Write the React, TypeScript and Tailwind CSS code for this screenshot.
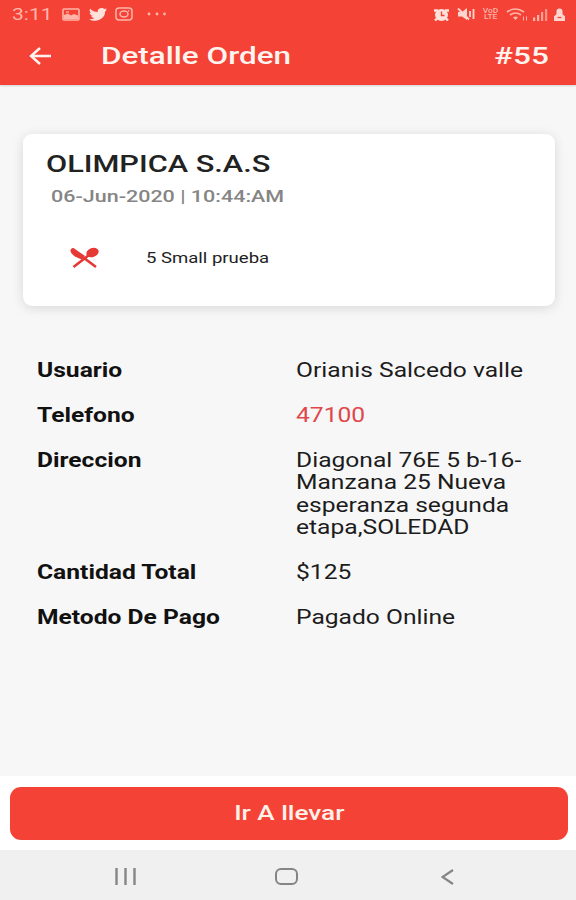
import { ReactNode } from "react";

type Row = {
  label: string;
  value: ReactNode;
  valueClass?: string;
};

const rows: Row[] = [
  { label: "Usuario", value: "Orianis Salcedo valle" },
  { label: "Telefono", value: "47100", valueClass: "text-[#e0474a]" },
  {
    label: "Direccion",
    value: (
      <>
        Diagonal 76E 5 b-16-
        <br />
        Manzana 25 Nueva
        <br />
        esperanza segunda
        <br />
        etapa,SOLEDAD
      </>
    ),
  },
  { label: "Cantidad Total", value: "$125" },
  { label: "Metodo De Pago", value: "Pagado Online" },
];

function StatusBar() {
  return (
    <div className="flex h-7 items-center justify-between pl-3 pr-[10px] text-[#ffb5aa]">
      <div className="flex items-center">
        <span className="w-[50px] origin-left scale-x-[1.24] text-[17px] leading-none">3:11</span>
        <svg className="h-[13px] w-[18px]" viewBox="0 0 18 13" fill="none" stroke="currentColor" strokeWidth="1.6">
          <rect x="1" y="1" width="16" height="11" rx="1" />
          <path d="M2 11V7l4-1.500 3 2 3-1.500 4 1.500V11z" fill="currentColor" stroke="none" />
          <path d="M4 4h3" strokeWidth="1.2" />
        </svg>
        <svg className="ml-[9px] h-[13px] w-[18px]" viewBox="0 0 24 20" preserveAspectRatio="none" fill="#ffe1dc">
          <path d="M24 2.4a10 10 0 0 1-2.8.8A5 5 0 0 0 23.3.5a10 10 0 0 1-3.1 1.2 4.9 4.9 0 0 0-8.4 4.5A14 14 0 0 1 1.7 1a4.9 4.9 0 0 0 1.5 6.600A5 5 0 0 1 1 7v.1a4.9 4.9 0 0 0 4 4.8 5 5 0 0 1-2.3.1 4.9 4.9 0 0 0 4.6 3.4A10 10 0 0 1 0 17.4 14 14 0 0 0 21.5 5a10 10 0 0 0 2.5-2.6z" />
        </svg>
        <svg className="ml-[8px] h-[14px] w-[18px]" viewBox="0 0 18 14" fill="none" stroke="currentColor" strokeWidth="1.5">
          <rect x="1" y="1" width="16" height="12" rx="3" />
          <ellipse cx="9" cy="7" rx="4" ry="3" />
          <path d="M13 3.8h1.2" />
        </svg>
        <svg className="ml-[14px] h-1 w-5" viewBox="0 0 20 4" fill="currentColor">
          <circle cx="2" cy="2" r="1.4" />
          <circle cx="10" cy="2" r="1.4" />
          <circle cx="17.500" cy="2" r="1.4" />
        </svg>
      </div>
      <div className="flex items-center">
        {/* alarm */}
        <svg className="-ml-[3px] mr-[2px] h-[13px] w-[17px]" viewBox="0 0 16 13">
          <ellipse cx="8" cy="7" rx="6.500" ry="6" fill="#ffe1dc" />
          <path d="M.500 2.500H4.500M15.500 2.500H11.500M3.500 10.500L1.500 12.500M12.500 10.500L14.500 12.500" stroke="#ffe1dc" strokeWidth="2.4" />
          <path d="M8 3.500V7.500H11" fill="none" stroke="#f44336" strokeWidth="1.4" />
        </svg>
        {/* muted */}
        <svg className="ml-[5px] h-[14px] w-[18px]" viewBox="0 0 18 14" fill="none" stroke="#ffd6cf" strokeWidth="1.8">
          <path d="M1 5h4l5-4v12L5 9.500H1z" fill="#ffd6cf" stroke="none" />
          <path d="M1 1.500L12 12.500M13 4v6M16.500 2v10" />
        </svg>
        <div className="ml-[7px] flex w-[17px] flex-col items-center text-[7px] font-medium leading-[6.5px]">
          <span className="scale-x-[1.2]">VoD</span>
          <span className="scale-x-[1.2]">LTE</span>
        </div>
        <svg className="ml-[7px] h-[13px] w-[23px]" viewBox="0 0 23 13" fill="none" stroke="currentColor" strokeWidth="1.6">
          <path d="M1 4Q9.500-2 18 4M4 7Q9.500 3 15 7" />
          <path d="M7 9.500Q9.500 7.500 12 9.500L9.500 12z" fill="currentColor" stroke="none" />
          <path d="M17.500 8.500v4M20.500 8.500v4" strokeWidth="1" />
        </svg>
        <svg className="ml-[3px] h-[13px] w-[16px]" viewBox="0 0 16 13" fill="currentColor">
          <rect x="1" y="9.500" width="2.200" height="3.500" />
          <rect x="5" y="7" width="2.200" height="6" />
          <rect x="9" y="4" width="2.200" height="9" opacity=".8" />
          <rect x="13" y="1" width="2.200" height="12" opacity=".7" />
        </svg>
        <svg className="ml-[5px] h-[13px] w-[13px]" viewBox="0 0 13 13" fill="#ffd6cf">
          <path d="M3.500 6V3.500a3 3 0 0 1 6 0V6l2.500 2.500V13H1V8.500z" />
          <path d="M4.500 9.500h4" stroke="#f44336" strokeWidth="1.300" />
        </svg>
      </div>
    </div>
  );
}

function Header() {
  return (
    <header className="h-[85px] bg-[#f44336] shadow-[0_1px_2px_rgba(0,0,0,0.15)]">
      <StatusBar />
      <div className="flex h-14 items-center pl-[29px] text-[#fff4f0]">
        <svg className="h-[18px] w-[23px]" viewBox="0 0 23 18" fill="none" stroke="currentColor" strokeWidth="2.4">
          <path d="M22 9H2M11 1L2 9L11 17" />
        </svg>
        <h1 className="ml-[49px] flex-1 origin-left scale-x-[1.31] whitespace-nowrap text-[24px] font-medium leading-none">
          Detalle Orden
        </h1>
        <span className="mr-[27px] origin-right scale-x-[1.31] text-[24px] font-medium leading-none">#55</span>
      </div>
    </header>
  );
}

function OrderCard() {
  return (
    <section className="ml-[23px] mt-[49px] mr-[21px] h-[172px] rounded-[9px] bg-white shadow-[0_2px_12px_rgba(0,0,0,0.13)]">
      <h2 className="ml-[22.5px] origin-left scale-x-[1.28] pt-[16px] text-[24px] font-medium leading-[28px] text-[#222]">
        OLIMPICA S.A.S
      </h2>
      <p className="ml-[28px] mt-[8px] origin-left scale-x-[1.265] text-[17px] font-medium leading-5 text-[#858585]">
        06-Jun-2020 | 10:44:AM
      </p>
      <div className="mt-[38px] flex h-[28px] items-center pl-[47px]">
        <svg className="h-[22px] w-[29px]" viewBox="0 0 29 22" fill="none" stroke="#e53935">
          <path d="M3.500 1L15 9L11.500 12.500L5 9.500Q0 6 .5 3Q1.500 .5 3.500 1z" fill="#e53935" stroke="none" />
          <path d="M12 9.500L26 20M19 8L3.500 20" strokeWidth="2.600" />
          <ellipse cx="22.500" cy="5.500" rx="6.300" ry="4.500" transform="rotate(-20 22.500 5.500)" fill="#e53935" stroke="none" />
        </svg>
        <span className="ml-[47px] origin-left scale-x-[1.235] text-[15px] leading-none text-[#222]">5 Small prueba</span>
      </div>
    </section>
  );
}

export default function App() {
  return (
    <main className="flex h-[900px] w-[576px] flex-col overflow-hidden bg-[#f7f7f7] font-['Roboto',sans-serif]">
      <Header />
      <OrderCard />

      <dl className="mt-[54px] flex flex-1 flex-col gap-[22.4px] pl-[37px] text-[19.5px] leading-[22.5px] text-[#1c1c1c]">
        {rows.map((row) => (
          <div key={row.label} className="flex">
            <dt className="w-[259px]">
              <span className="inline-block origin-left scale-x-[1.262] whitespace-nowrap font-bold text-[#111]">{row.label}</span>
            </dt>
            <dd className={row.valueClass}>
              <span className="inline-block origin-left scale-x-[1.262] whitespace-nowrap">{row.value}</span>
            </dd>
          </div>
        ))}
      </dl>

      <div className="h-[74px] bg-white pl-[10px] pr-[8px] pt-[11px]">
        <button className="flex h-[53px] w-full items-center justify-center rounded-[11px] bg-[#f44336] text-[#fff1ea]">
          <span className="scale-x-[1.245] text-[21px] font-medium leading-none">Ir A llevar</span>
        </button>
      </div>

      <nav className="flex h-[50px] items-center bg-[#f0f0f0] pl-[115px] pt-[3px] text-[#858585]">
        <svg className="h-[17px] w-[21px]" viewBox="0 0 21 17" fill="none" stroke="currentColor" strokeWidth="2.4">
          <path d="M1.500 0v17M10.500 0v17M19.500 0v17" />
        </svg>
        <svg className="ml-[139px] h-[17px] w-[23px]" viewBox="0 0 23 17" fill="none" stroke="currentColor" strokeWidth="2">
          <rect x="1" y="1" width="21" height="15" rx="5" />
        </svg>
        <svg className="ml-[143px] h-[16px] w-[13px]" viewBox="0 0 13 16" fill="none" stroke="currentColor" strokeWidth="2.2">
          <path d="M12 1L1.500 8L12 15" />
        </svg>
      </nav>
    </main>
  );
}
